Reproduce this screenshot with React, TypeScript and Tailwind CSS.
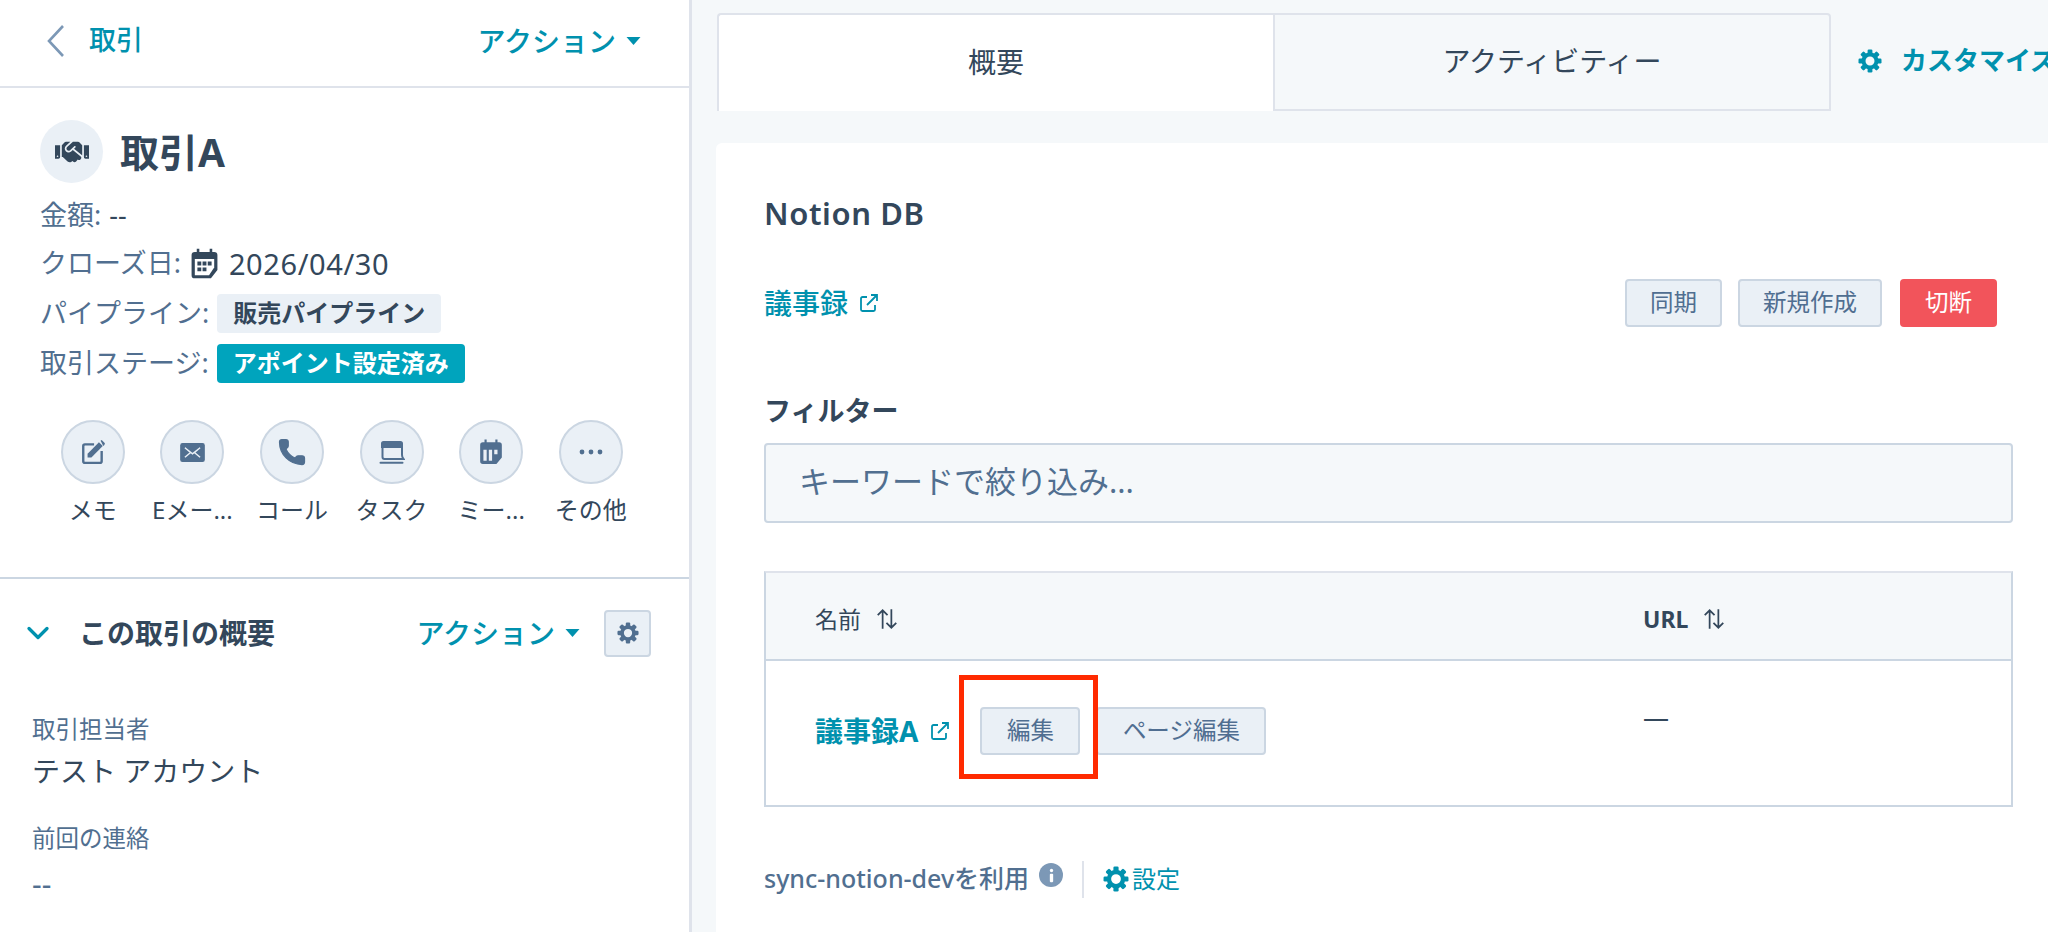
import { FaHandshake } from 'react-icons/fa'
import { ChevronDown, Phone } from 'lucide-react'

function Caret() {
  return (
    <svg viewBox="0 0 14 8" className="w-[15px] h-[8px] fill-[#0091ae]">
      <path d="M0 0h14L7 8z" />
    </svg>
  )
}

function Gear({ className }: { className: string }) {
  return (
    <svg viewBox="0 0 24 24" className={className}>
      <circle cx="12" cy="12" r="6.5" fill="none" stroke="currentColor" strokeWidth="4" />
      {[0, 45, 90, 135, 180, 225, 270, 315].map((a) => (
        <rect key={a} x="9.6" y="0.5" width="4.8" height="5.5" rx="1.2" fill="currentColor" transform={`rotate(${a} 12 12)`} />
      ))}
    </svg>
  )
}

function ExternalLink({ className }: { className: string }) {
  return (
    <svg viewBox="0 0 20 20" fill="none" stroke="currentColor" strokeWidth="1.8" className={className}>
      <path d="M8 4H3.500A1.500 1.500 0 0 0 2 5.500V16.500A1.500 1.500 0 0 0 3.500 18H14.500A1.500 1.500 0 0 0 16 16.500V12" />
      <path d="M8 12L18 2M12 2h6v6" />
    </svg>
  )
}

function SortIcon() {
  return (
    <svg viewBox="0 0 22 22" fill="none" stroke="#33475b" strokeWidth="1.600" className="w-[24px] h-[24px]">
      <path d="M7 20V3M2.500 7.500L7 3l4.500 4.500" />
      <path d="M15 2v17M10.500 14.500L15 19l4.500-4.500" />
    </svg>
  )
}

function NoteIcon() {
  return (
    <svg viewBox="0 0 24 24" className="w-[26px] h-[26px]" fill="none">
      <path d="M13 5H4.500A1.500 1.500 0 0 0 3 6.500v14A1.500 1.500 0 0 0 4.500 22h14a1.500 1.500 0 0 0 1.500-1.500V11" stroke="currentColor" strokeWidth="2.200" />
      <path d="M7 13.500L17.500 3l3.500 3.500L10.500 17H7z" fill="currentColor" />
      <path d="M19 1.500l1-.5 3 3-.5 1.500-1 1z" fill="currentColor" />
    </svg>
  )
}

function MailIcon() {
  return (
    <svg viewBox="0 0 26 20" className="w-[25px] h-[19px]">
      <rect width="26" height="20" rx="2.500" fill="currentColor" />
      <path d="M5 5l6 5-6 5M21 5l-6 5 6 5M5 5l8 6.500L21 5" stroke="#eaf0f6" strokeWidth="1.500" fill="none" />
    </svg>
  )
}

function TaskIcon() {
  return (
    <svg viewBox="0 0 26 26" className="w-[26px] h-[26px]" fill="none">
      <path d="M2 4.500A2.500 2.500 0 0 1 4.500 2h17A2.500 2.500 0 0 1 24 4.500V9H2z" fill="currentColor" />
      <path d="M3.500 8v10c0 1.200.8 2 2 2H24.500c-1-1.200-1.500-2.500-1.500-4V8" stroke="currentColor" strokeWidth="2" />
      <path d="M1.500 23.800H23.500" stroke="currentColor" strokeWidth="2" strokeLinecap="round" />
    </svg>
  )
}

function MeetingIcon() {
  return (
    <svg viewBox="0 0 24 24" className="w-[26px] h-[26px]">
      <path d="M6 .5h2V3h8V.5h2V3h1.500A2.500 2.500 0 0 1 22 5.500V17l-5 6H4.500A2.500 2.500 0 0 1 2 20.500v-15A2.500 2.500 0 0 1 4.500 3H6z" fill="currentColor" />
      <path d="M5 10h3v10H5zM10 10h3v10h-3zM15 10h3v4h-3z" fill="#eaf0f6" />
    </svg>
  )
}

function DotsIcon() {
  return (
    <svg viewBox="0 0 24 6" className="w-[24px] h-[6px] fill-current">
      <circle cx="3" cy="3" r="2.400" />
      <circle cx="12" cy="3" r="2.400" />
      <circle cx="21" cy="3" r="2.400" />
    </svg>
  )
}

function CalendarIcon() {
  return (
    <svg viewBox="0 0 24 24" className="w-[31px] h-[31px] text-[#33475b]">
      <path d="M6 .5h2V3h8V.5h2V3h1.500A2.500 2.500 0 0 1 22 5.500V17l-5 6.500H4.500A2.500 2.500 0 0 1 2 21v-15.500A2.500 2.500 0 0 1 4.500 3H6z" fill="currentColor" />
      <path d="M4.500 8.500h15v6.500l-4 6H4.500z" fill="#fff" />
      <path d="M6.500 10.500h3v3h-3zM10.500 10.500h3v3h-3zM14.500 10.500h3v3h-3zM6.500 15h3v3h-3zM10.500 15h3v3h-3z" fill="currentColor" />
    </svg>
  )
}

const activities = [
  { label: 'メモ', icon: <NoteIcon /> },
  { label: 'Eメー...', icon: <MailIcon /> },
  { label: 'コール', icon: <Phone size={30} fill="currentColor" strokeWidth={1} /> },
  { label: 'タスク', icon: <TaskIcon /> },
  { label: 'ミー...', icon: <MeetingIcon /> },
  { label: 'その他', icon: <DotsIcon /> },
]

function SmallButton({ children, className = '' }: { children: string; className?: string }) {
  return (
    <button className={`h-[48px] px-[23px] rounded-[4px] bg-[#eaf0f6] border-2 border-[#cbd6e2] text-[#506e91] text-[23.5px] ${className}`}>
      {children}
    </button>
  )
}

export default function App() {
  return (
    <div className="w-[2048px] h-[932px] overflow-hidden flex bg-[#f5f8fa] text-[#33475b] font-['Noto_Sans','Noto_Sans_CJK_JP',sans-serif]">
      {/* Left sidebar */}
      <aside className="w-[692px] shrink-0 bg-white border-r-[3px] border-[#dfe3eb]">
        <div className="h-[88px] border-b-2 border-[#dfe3eb] pl-[46px] pr-[48px] flex items-center justify-between pb-[5px]">
          <div className="flex items-center gap-[23px] text-[#0091ae] text-[27px] font-medium">
            <svg viewBox="0 0 20 34" fill="none" stroke="#7c98b6" strokeWidth="2.600" className="w-[20px] h-[34px]">
              <path d="M17 2L3 17l14 15" />
            </svg>
            <span>取引</span>
          </div>
          <div className="flex items-center gap-[10px] text-[#0091ae] text-[28px] font-medium">
            <span>アクション</span>
            <Caret />
          </div>
        </div>

        <div className="h-[491px] border-b-2 border-[#cbd6e2] pl-[40px] pt-[32px]">
          <div className="flex items-center gap-[17px]">
            <div className="w-[63px] h-[63px] rounded-full bg-[#eaf0f6] flex items-center justify-center">
              <FaHandshake size={34} />
            </div>
            <h1 className="text-[39px] font-bold leading-none">取引A</h1>
          </div>
          <div className="mt-[8px] h-[48px] flex items-center text-[27px] gap-[8px]">
            <span className="text-[#516f90]">金額:</span>
            <span>--</span>
          </div>
          <div className="h-[49px] flex items-center text-[27px]">
            <span className="text-[#516f90]">クローズ日:</span>
            <span className="ml-[8px]"><CalendarIcon /></span>
            <span className="ml-[9px] text-[29px] tracking-[0.6px]">2026/04/30</span>
          </div>
          <div className="h-[50px] flex items-center text-[27px] gap-[8px]">
            <span className="text-[#516f90]">パイプライン:</span>
            <span className="h-[39px] px-[16px] flex items-center rounded-[4px] bg-[#eaf0f6] text-[24px] font-bold">販売パイプライン</span>
          </div>
          <div className="h-[50px] flex items-center text-[27px] gap-[8px]">
            <span className="text-[#516f90]">取引ステージ:</span>
            <span className="h-[39px] px-[16px] flex items-center rounded-[4px] bg-[#00a4bd] text-white text-[24px] font-bold">アポイント設定済み</span>
          </div>

          <div className="mt-[32px] ml-[3px] flex">
            {activities.map((a) => (
              <div key={a.label} className="w-[99.6px] shrink-0 flex flex-col items-center">
                <div className="w-[64px] h-[64px] rounded-full bg-[#eaf0f6] border-2 border-[#cbd6e2] text-[#516f90] flex items-center justify-center">
                  {a.icon}
                </div>
                <div className="mt-[8px] text-center whitespace-nowrap text-[24px] leading-[36px]">{a.label}</div>
              </div>
            ))}
          </div>
        </div>

        <div className="pl-[32px] pr-[38px]">
          <div className="h-[108px] flex items-center">
            <ChevronDown size={36} strokeWidth={2.200} className="text-[#0091ae] -ml-[12px]" />
            <span className="ml-[23px] text-[28px] font-bold">この取引の概要</span>
            <div className="ml-auto flex items-center gap-[10px] text-[#0091ae] text-[28px] font-medium">
              <span>アクション</span>
              <Caret />
            </div>
            <div className="ml-[24px] w-[47px] h-[47px] rounded-[4px] bg-[#eaf0f6] border-2 border-[#cbd6e2] flex items-center justify-center text-[#516f90]">
              <Gear className="w-[22px] h-[22px]" />
            </div>
          </div>
          <div className="mt-[25px] text-[#516f90] text-[23.5px] leading-[34px]">取引担当者</div>
          <div className="mt-[8px] text-[28px] leading-[34px]">テスト アカウント</div>
          <div className="mt-[33px] text-[#516f90] text-[23.5px] leading-[34px]">前回の連絡</div>
          <div className="mt-[12px] text-[30px] leading-[34px] text-[#516f90]">--</div>
        </div>
      </aside>

      {/* Main column */}
      <main className="flex-1 min-w-0 pl-[25px]">
        <div className="mt-[13px] flex items-center">
          <div className="w-[1114px] h-[98px] flex shrink-0 text-[28px]">
            <div className="w-[556px] bg-white border-t-2 border-l-2 border-[#dfe3eb] rounded-tl-[4px] flex items-center justify-center pb-[3px]">概要</div>
            <div className="flex-1 bg-[#f5f8fa] border-2 border-[#dfe3eb] rounded-tr-[4px] flex items-center justify-center pb-[3px]">アクティビティー</div>
          </div>
          <div className="ml-[27px] flex items-center gap-[19px] text-[#0091ae] text-[26px] font-bold whitespace-nowrap pb-[3px]">
            <Gear className="w-[24px] h-[24px] shrink-0" />
            <span>カスタマイズ</span>
          </div>
        </div>

        <section className="mt-[32px] -ml-px h-[800px] bg-white rounded-tl-[6px] pl-[48px] pr-[35px] pt-[50px]">
          <h2 className="h-[40px] leading-[40px] text-[31px] tracking-[0.6px] font-semibold">Notion DB</h2>

          <div className="mt-[46px] flex items-center">
            <a className="flex items-center gap-[11px] text-[#0091ae] text-[28px] font-medium">
              <span>議事録</span>
              <ExternalLink className="w-[20px] h-[20px]" />
            </a>
            <div className="ml-auto mr-[16px] flex gap-[16px]">
              <SmallButton>同期</SmallButton>
              <SmallButton>新規作成</SmallButton>
              <button className="ml-[2px] h-[48px] px-[25px] rounded-[4px] bg-[#f2545b] text-white text-[23.5px]">切断</button>
            </div>
          </div>

          <div className="mt-[68px] h-[32px] leading-[32px] text-[27px] font-bold">フィルター</div>
          <div className="mt-[16px] h-[80px] rounded-[4px] bg-[#f5f8fa] border-2 border-[#cbd6e2] flex items-center pl-[33px] text-[31px] text-[#516f90] pb-[3px]">
            キーワードで絞り込み...
          </div>

          <div className="mt-[48px] border-2 border-[#cbd6e2] border-t-[#dfe3eb]">
            <div className="h-[88px] bg-[#f5f8fa] border-b-2 border-[#cbd6e2] grid grid-cols-[877px_1fr] items-center pt-[6px]">
              <div className="pl-[49px] flex items-center gap-[14px] text-[23px]">
                <span>名前</span>
                <SortIcon />
              </div>
              <div className="flex items-center gap-[14px] text-[23px] font-bold">
                <span>URL</span>
                <SortIcon />
              </div>
            </div>
            <div className="relative h-[144px] grid grid-cols-[877px_1fr]">
              <div className="pl-[49px] pt-[46px] flex items-start">
                <a className="h-[48px] flex items-center gap-[12px] text-[#0091ae] text-[28px] font-bold">
                  <span>議事録A</span>
                  <ExternalLink className="w-[20px] h-[20px]" />
                </a>
                <SmallButton className="ml-[30px] w-[100px] px-0">編集</SmallButton>
                <SmallButton className="ml-[16px] w-[170px] px-0">ページ編集</SmallButton>
              </div>
              <div className="pt-[36px] text-[26px] leading-[40px]">—</div>
              {/* annotation box drawn on the screenshot */}
              <div className="absolute left-[193px] top-[14px] w-[139px] h-[104px] border-[5px] border-[#ff2a00]" />
            </div>
          </div>

          <div className="mt-[52px] h-[40px] flex items-center text-[#516f90] text-[25px]">
            <span className="font-medium whitespace-nowrap">sync-notion-devを利用</span>
            <span className="ml-[10px] -mt-[8px] w-[24px] h-[24px] rounded-full bg-[#7c98b6] text-white flex items-center justify-center">
              <svg viewBox="0 0 6 16" className="w-[5px] h-[15px] fill-white">
                <circle cx="3" cy="2" r="2" />
                <rect x="1" y="6" width="4" height="10" rx="1" />
              </svg>
            </span>
            <div className="ml-[19px] w-[2px] h-[37px] bg-[#dfe3eb]" />
            <Gear className="ml-[19px] w-[26px] h-[26px] text-[#0091ae]" />
            <span className="ml-[3px] text-[#0091ae] text-[24px]">設定</span>
          </div>
        </section>
      </main>
    </div>
  )
}
